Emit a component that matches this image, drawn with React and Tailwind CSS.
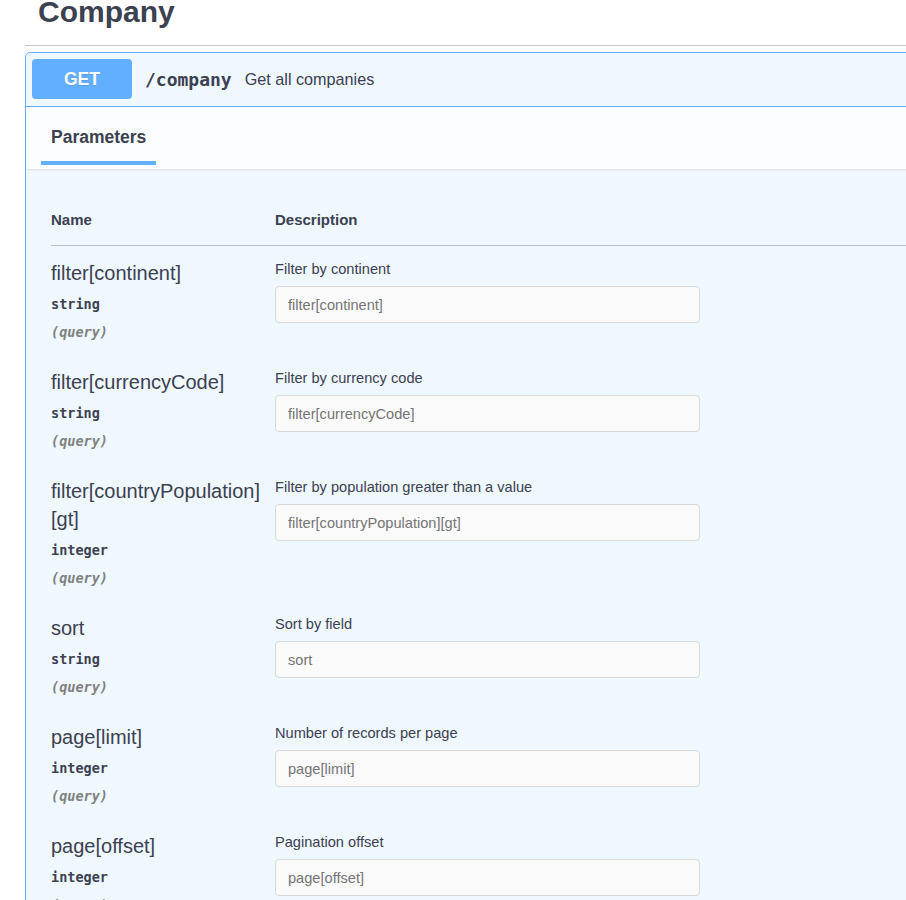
const params = [
  { name: ["filter[continent]"], type: "string", desc: "Filter by continent" },
  { name: ["filter[currencyCode]"], type: "string", desc: "Filter by currency code" },
  {
    name: ["filter[countryPopulation]", "[gt]"],
    type: "integer",
    desc: "Filter by population greater than a value",
  },
  { name: ["sort"], type: "string", desc: "Sort by field" },
  { name: ["page[limit]"], type: "integer", desc: "Number of records per page" },
  { name: ["page[offset]"], type: "integer", desc: "Pagination offset" },
];

const sans = "font-['Liberation_Sans',Arial,sans-serif]";
const mono = "font-['DejaVu_Sans_Mono',monospace]";

function ParamRow({ p }) {
  return (
    <div className="flex pt-[13px] pb-[9px]">
      <div className="w-[224px] shrink-0">
        {p.name.map((n) => (
          <div key={n} className="text-[20px] leading-[28px] text-[#3b4151]">
            {n}
          </div>
        ))}
        <div className={`${mono} mt-[3px] text-[13.5px] leading-[28px] font-bold text-[#3b4151]`}>
          {p.type}
        </div>
        <div className={`${mono} text-[13.5px] leading-[28px] font-semibold italic text-[#808080]`}>
          (query)
        </div>
      </div>
      <div className="flex flex-col">
        <div className="text-[14.6px] leading-[20px] text-[#3b4151]">{p.desc}</div>
        <input
          placeholder={p.name.join("")}
          className="mt-[7px] w-[425px] h-[37px] px-[12px] rounded-[4px] border border-[#d9d9d9] bg-[#fafafa] text-[14.6px] placeholder:text-[#757575] outline-none"
        />
      </div>
    </div>
  );
}

export default function App() {
  return (
    <div className={`${sans} h-[900px] w-[906px] overflow-hidden bg-white text-[#3b4151]`}>
      <div className="w-[980px] pl-[25px]">
        <div className="border-b border-[#c4c6cb] pl-[13px] pb-[18px]">
          <h3 className="-mt-[3px] text-[30px] leading-[30px] font-bold">Company</h3>
        </div>

        <div className="mt-[6px] rounded-[5px] border border-[#61affe] bg-[#eff7ff]">
          <div className="flex items-center border-b border-[#61affe] pl-[6px] pt-[6px] pb-[7px]">
            <div className="flex h-[40px] w-[100px] items-center justify-center rounded-[4px] bg-[#61affe] text-[17.5px] font-bold text-white [text-shadow:0_1px_0_rgba(0,0,0,0.1)]">
              GET
            </div>
            <span className={`${mono} ml-[13px] text-[18px] font-bold`}>/company</span>
            <span className="ml-[13px] text-[16.2px]">Get all companies</span>
          </div>

          <div className="flex bg-[#fcfdff] pl-[15px] pt-[20px] pb-[4px] shadow-[0_1px_2px_rgba(0,0,0,0.1)]">
            <div className="flex flex-col">
              <div className="px-[10px] text-[17.5px] leading-[20px] font-bold">Parameters</div>
              <div className="mt-[14px] h-[4px] bg-[#61affe]" />
            </div>
          </div>

          <div className="pl-[25px] pt-[42px]">
            <div className="flex border-b border-[#b8bfcb] pb-[16px] text-[15px] leading-[18px] font-bold">
              <div className="w-[224px]">Name</div>
              <div>Description</div>
            </div>
            {params.map((p) => (
              <ParamRow key={p.desc} p={p} />
            ))}
          </div>
        </div>
      </div>
    </div>
  );
}
